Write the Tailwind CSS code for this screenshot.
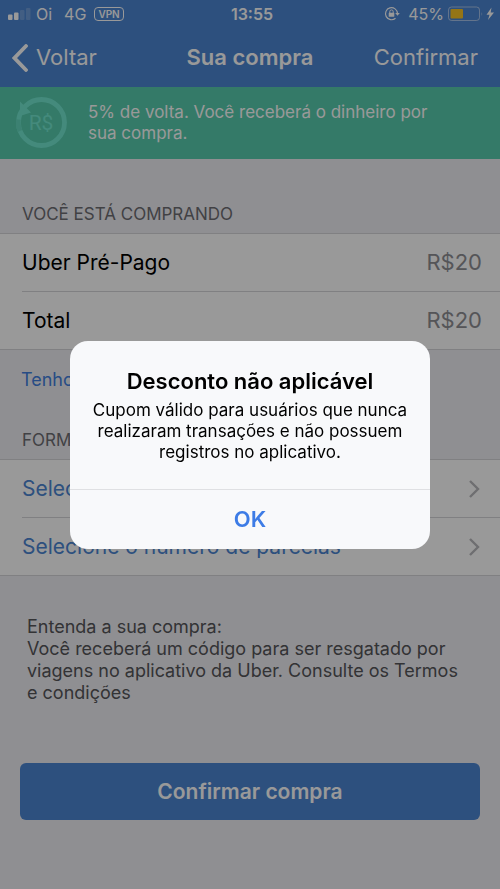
<!DOCTYPE html>
<html lang="pt-BR">
<head>
<meta charset="utf-8">
<meta name="viewport" content="width=device-width, initial-scale=1">
<title>Sua compra</title>
<script src="https://cdn.jsdelivr.net/npm/@tailwindcss/browser@4"></script>
</head>
<body class="min-h-screen bg-[#efeff4] font-['Inter','Liberation_Sans',sans-serif] text-black">
<div class="bg-[#4b85d2] text-white">
  <div class="grid h-7 grid-cols-3 items-center pr-1 pl-2 text-base">
    <div class="flex items-center">
      <svg class="h-3 w-6" viewBox="0 0 24 12" fill="currentColor" aria-hidden="true"><rect y="6.5" width="4.5" height="5.5" rx="1"/><rect x="6" y="4.5" width="4.5" height="7.5" rx="1"/><rect x="12" y="2" width="4.5" height="10" rx="1" opacity=".2"/><rect x="18" width="4.5" height="12" rx="1" opacity=".2"/></svg>
      <span class="ml-1">Oi</span><span class="ml-3">4G</span>
      <span class="ml-2 rounded border-1 border-white px-[3px] text-[10px] leading-3 font-semibold">VPN</span>
    </div>
    <span class="text-center font-semibold">13:55</span>
    <div class="flex items-center justify-end">
      <svg class="mr-2 h-4 w-4" viewBox="0 0 16 16" fill="none" stroke="currentColor" aria-hidden="true"><path d="M11.5 12.2A6 6 0 1 1 13.5 7.5" stroke-width="1.2"/><path d="M11.2 7h4.6l-2.3 2.8z" fill="currentColor" stroke="none"/><path d="M5.8 7V5.6a1.7 1.7 0 0 1 3.4 0V7" stroke-width="1"/><rect x="4.7" y="6.8" width="5.6" height="4" rx=".6" fill="currentColor" stroke="none"/></svg>
      <span>45%</span>
      <svg class="ml-1 h-4 w-[48px]" viewBox="0 0 48 16" fill="none" aria-hidden="true"><rect x=".5" y="1" width="31" height="13.5" rx="3" stroke="#fff" stroke-opacity=".5"/><rect x="2.5" y="3" width="12.5" height="9.5" rx="1" fill="#f7c325"/><path d="M33.5 6q1.5 2 0 4z" fill="#fff" opacity=".5"/><path d="M43.5 1.5l-5 7.2h3l-1.5 5.3 6-7.5h-3.3z" fill="#fff"/></svg>
    </div>
  </div>
  <header class="grid h-[59px] grid-cols-[1fr_auto_1fr] items-center px-3 text-[22px]">
    <button class="flex items-center gap-2 justify-self-start"><svg class="h-7 w-4" viewBox="0 0 16 28" fill="none" stroke="currentColor" stroke-width="3.8" stroke-linecap="round" aria-hidden="true"><path d="M14 2L2.5 14 14 26"/></svg>Voltar</button>
    <h1 class="font-semibold">Sua compra</h1>
    <button class="justify-self-end pr-[10px]">Confirmar</button>
  </header>
</div>
<section class="flex h-[72px] items-center bg-[#57cbad] px-4">
  <svg class="h-[52px] w-[52px] shrink-0" viewBox="0 0 52 52" fill="none" aria-hidden="true"><circle cx="25.5" cy="25.5" r="23" stroke="#72e6cf" stroke-width="4.8"/><path d="M2.3 22.5A23 23 0 0 0 4 34" stroke="#65d8be" stroke-width="4.8"/><path d="M4 4.500V19L15 15.500z" fill="#72e6cf"/><text x="25" y="32.500" text-anchor="middle" font-size="21" font-family="Roboto" fill="#72e6cf">R$</text></svg>
  <p class="ml-5 max-w-[360px] text-[17px] leading-[21px] text-white">5% de volta. Você receberá o dinheiro por sua compra.</p>
</section>
<main>
  <h2 class="px-[22px] pt-11 pb-2 text-[17px] leading-[22px] text-[#6d6d72]">VOCÊ ESTÁ COMPRANDO</h2>
  <dl class="border-y border-[#d5d5d9] bg-white pl-[22px]">
    <div class="flex h-[58px] items-center justify-between border-b border-[#d5d5d9] pr-[18px]"><dt class="text-[21px]">Uber Pré-Pago</dt><dd class="text-[22px] text-[#8e8e93]">R$20</dd></div>
    <div class="flex h-[57px] items-center justify-between pr-[18px]"><dt class="text-[21px]">Total</dt><dd class="text-[22px] text-[#8e8e93]">R$20</dd></div>
  </dl>
  <a href="#" class="mt-[18px] block px-[21px] text-lg leading-6 text-[#427fde]">Tenho um cupom</a>
  <h2 class="px-[22px] pt-[37px] pb-2 text-[17px] leading-[22px] text-[#6d6d72]">FORMA DE PAGAMENTO</h2>
  <div class="border-y border-[#d5d5d9] bg-white pl-[22px] text-[21px] text-[#4b85d2]">
    <button class="flex h-[58px] w-full items-center justify-between border-b border-[#d5d5d9] pr-5">Selecione o cartão<svg class="h-[18px] w-3" viewBox="0 0 12 18" fill="none" stroke="#b8b8bc" stroke-width="2.4" aria-hidden="true"><path d="M2 1l8 8-8 8"/></svg></button>
    <button class="flex h-[57px] w-full items-center justify-between pr-5">Selecione o número de parcelas<svg class="h-[18px] w-3" viewBox="0 0 12 18" fill="none" stroke="#b8b8bc" stroke-width="2.4" aria-hidden="true"><path d="M2 1l8 8-8 8"/></svg></button>
  </div>
  <div class="px-[27px] pt-10 text-lg leading-[22px] text-[#555559]">
    <p>Entenda a sua compra:</p>
    <p>Você receberá um código para ser resgatado por viagens no aplicativo da Uber. Consulte os Termos e condições</p>
  </div>
  <div class="px-5 pt-[59px] pb-5"><button class="h-[57px] w-full rounded-md bg-[#4b85d2] text-[21px] font-semibold text-white">Confirmar compra</button></div>
</main>
<div class="fixed inset-0 flex items-center justify-center bg-black/40">
  <div role="alertdialog" aria-modal="true" aria-labelledby="alert-title" aria-describedby="alert-text" class="w-[360px] overflow-hidden rounded-[18px] bg-[#f8f9fb] text-center">
    <div class="px-4 pt-[26px] pb-[26px]">
      <h2 id="alert-title" class="text-[22px] leading-7 font-semibold">Desconto não aplicável</h2>
      <p id="alert-text" class="pt-[5px] text-[17px] leading-[21px]">Cupom válido para usuários que nunca realizaram transações e não possuem registros no aplicativo.</p>
    </div>
    <button class="h-[60px] w-full border-t border-[#dfe0e3] text-[22px] font-semibold text-[#3d7ce6]">OK</button>
  </div>
</div>
</body>
</html>
